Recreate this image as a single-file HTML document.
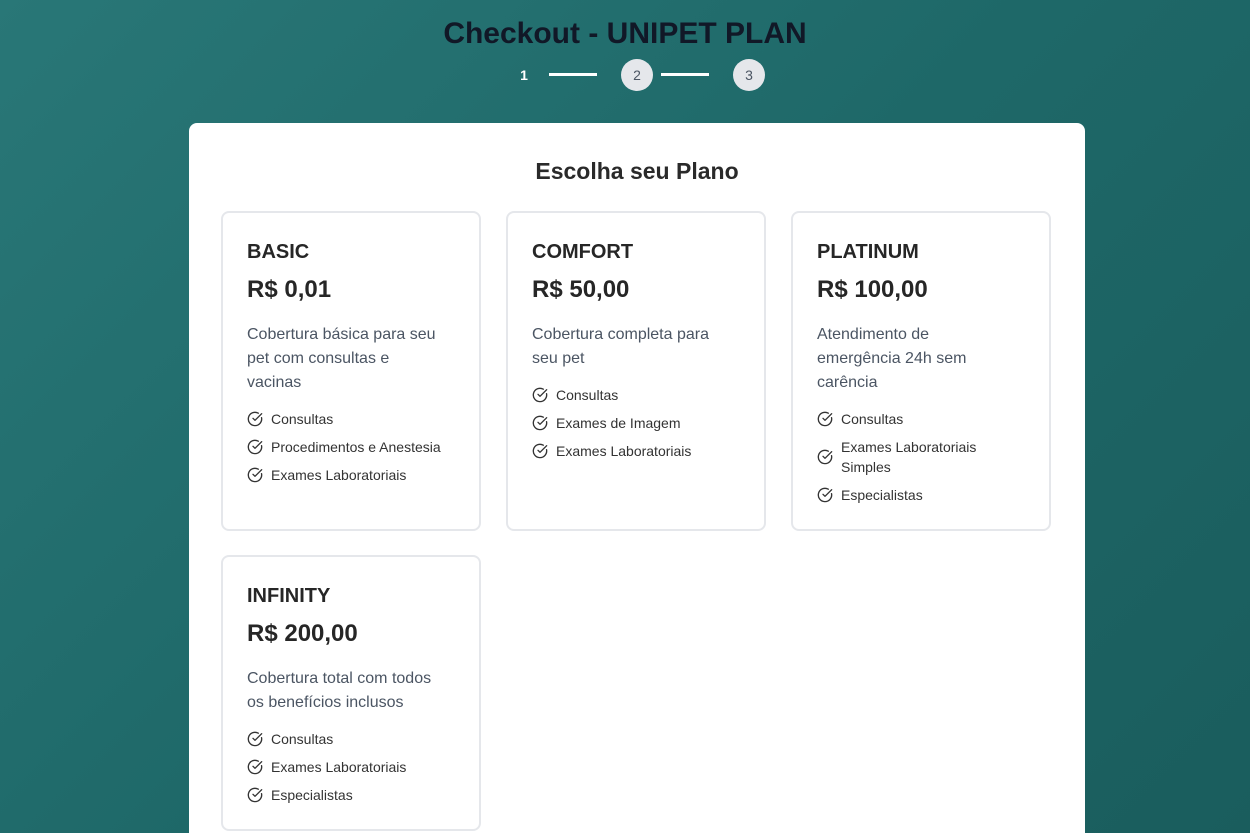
<!DOCTYPE html>
<html><head><meta charset="utf-8"><style>
*{box-sizing:border-box;margin:0;padding:0}
html,body{width:1250px;height:833px;overflow:hidden}
body{font-family:"Liberation Sans",sans-serif;background:linear-gradient(135deg,#297777 0%,#1e6868 50%,#1a5d5d 100%);position:relative}
h1{position:absolute;top:15px;left:0;width:1250px;text-align:center;font-size:30px;font-weight:bold;color:#111827;line-height:38px}
.step{position:absolute;top:59px;width:32px;height:32px;border-radius:50%;text-align:center;line-height:32px;font-size:14px}
.s1{left:508px;color:#fff;font-weight:bold}
.s2,.s3{background:#e5e7eb;color:#4b5563}
.s2{left:621px}.s3{left:733px}
.ln{position:absolute;top:73px;height:3px;width:48px;background:#fff}
.panel{position:absolute;left:189px;top:123px;width:896px;height:710px;background:#fff;border-radius:8px 8px 0 0}
h2{position:absolute;top:156px;left:189px;width:896px;text-align:center;font-size:23px;font-weight:bold;color:#2a2a2a;line-height:30px}
.card{position:absolute;width:260px;border:2px solid #e5e7eb;border-radius:8px;padding:25px 24px 23px}
.name{font-size:20px;font-weight:bold;color:#262626;line-height:28px}
.price{font-size:24px;font-weight:bold;color:#262626;line-height:32px;margin-top:8px}
.desc{font-size:16px;color:#4b5563;line-height:24px;margin-top:17px}
ul{list-style:none;margin-top:14px}
li{display:flex;align-items:center;font-size:14px;color:#333;line-height:20px;margin-bottom:8px;white-space:nowrap}
li svg{width:16px;height:16px;margin-right:8px;flex:none}
</style></head><body>
<h1>Checkout - UNIPET PLAN</h1>
<div class="step s1">1</div><div class="ln" style="left:549px"></div>
<div class="step s2">2</div><div class="ln" style="left:661px"></div>
<div class="step s3">3</div>
<div class="panel"></div>
<h2>Escolha seu Plano</h2>
<svg width="0" height="0" style="position:absolute"><defs><symbol id="c" viewBox="0 0 24 24"><path d="M21.8 10A10 10 0 1 1 17 3.3" fill="none" stroke="#333" stroke-width="2" stroke-linecap="round"/><path d="m9 11 3 3L22 4" fill="none" stroke="#333" stroke-width="2" stroke-linecap="round" stroke-linejoin="round"/></symbol></defs></svg>
<div class="card" style="left:221px;top:211px;height:320px">
<div class="name">BASIC</div><div class="price">R$ 0,01</div>
<div class="desc">Cobertura básica para seu<br>pet com consultas e<br>vacinas</div>
<ul><li><svg><use href="#c"/></svg>Consultas</li><li><svg><use href="#c"/></svg>Procedimentos e Anestesia</li><li><svg><use href="#c"/></svg>Exames Laboratoriais</li></ul></div>
<div class="card" style="left:506px;top:211px;height:320px">
<div class="name">COMFORT</div><div class="price">R$ 50,00</div>
<div class="desc">Cobertura completa para<br>seu pet</div>
<ul><li><svg><use href="#c"/></svg>Consultas</li><li><svg><use href="#c"/></svg>Exames de Imagem</li><li><svg><use href="#c"/></svg>Exames Laboratoriais</li></ul></div>
<div class="card" style="left:791px;top:211px;height:320px">
<div class="name">PLATINUM</div><div class="price">R$ 100,00</div>
<div class="desc">Atendimento de<br>emergência 24h sem<br>carência</div>
<ul><li><svg><use href="#c"/></svg>Consultas</li><li><svg><use href="#c"/></svg>Exames Laboratoriais<br>Simples</li><li><svg><use href="#c"/></svg>Especialistas</li></ul></div>
<div class="card" style="left:221px;top:555px;height:276px">
<div class="name">INFINITY</div><div class="price">R$ 200,00</div>
<div class="desc">Cobertura total com todos<br>os benefícios inclusos</div>
<ul><li><svg><use href="#c"/></svg>Consultas</li><li><svg><use href="#c"/></svg>Exames Laboratoriais</li><li><svg><use href="#c"/></svg>Especialistas</li></ul></div>
</body></html>
